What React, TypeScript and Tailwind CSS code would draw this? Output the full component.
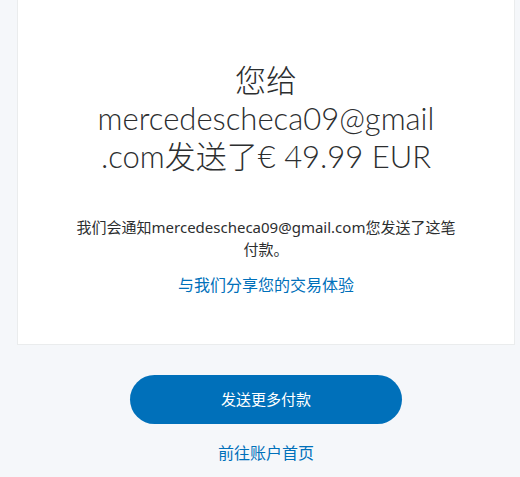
import React from 'react';

const App: React.FC = () => {
  return (
    <div className="min-h-[477px] w-[520px] bg-[#f5f7fa] pl-[17px] pr-[5px] font-['Noto_Sans','Noto_Sans_CJK_SC',sans-serif] text-[#2c2e2f]">
      <section className="flex flex-col items-center border border-t-0 border-[#eaeced] bg-white pt-[61px] pb-[48px] text-center">
        <h1 className="font-['Lato','Noto_Sans_CJK_SC',sans-serif] text-[31px] font-light leading-[38px] text-[#2c2e2f]">
          您给
          <br />
          mercedescheca09@gmail
          <br />
          .com发送了€ 49.99 EUR
        </h1>
        <p className="mt-[41px] text-[15px] leading-[22px] text-[#2c2e2f]">
          我们会通知mercedescheca09@gmail.com您发送了这笔
          <br />
          付款。
        </p>
        <a href="#" className="mt-[14px] text-[16px] leading-[22px] text-[#0070ba]">
          与我们分享您的交易体验
        </a>
      </section>
      <div className="flex flex-col items-center pt-[30px]">
        <button className="h-[49px] w-[272px] rounded-full bg-[#0070ba] text-[15px] text-white">
          发送更多付款
        </button>
        <a href="#" className="mt-[18px] text-[16px] leading-[22px] text-[#0070ba]">
          前往账户首页
        </a>
      </div>
    </div>
  );
};

export default App;
